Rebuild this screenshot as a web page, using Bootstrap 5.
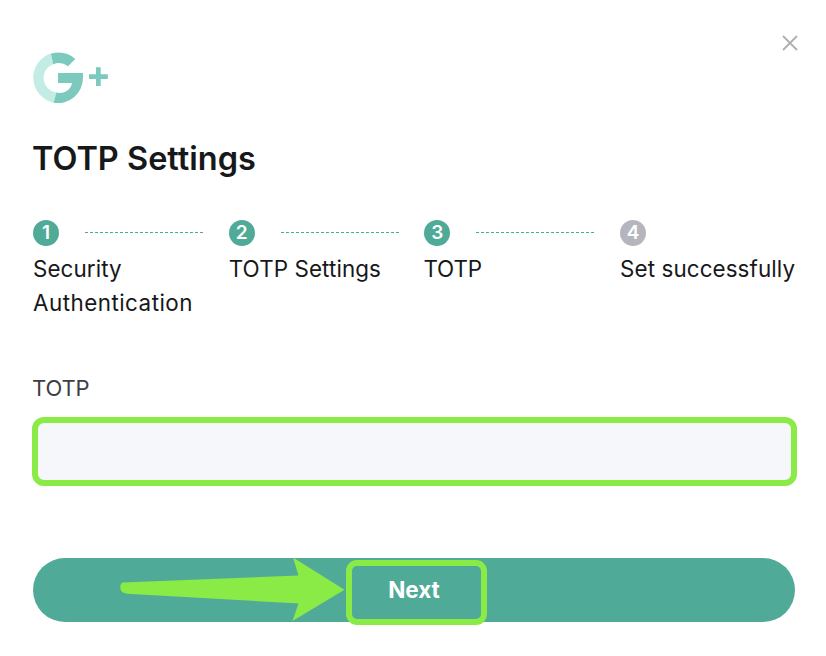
<!DOCTYPE html>
<html lang="en">
<head>
<meta charset="utf-8">
<meta name="viewport" content="width=device-width, initial-scale=1">
<title>TOTP Settings</title>
<link href="https://cdn.jsdelivr.net/npm/bootstrap@5.3.0/dist/css/bootstrap.min.css" rel="stylesheet">
<style>
body{font-family:Inter,"Liberation Sans",sans-serif;color:#17181a;background:#fff;overflow:hidden}
.dialog-box{height:656px;padding:52px 31px 0 33px}
.close-x{top:35px;right:28px;width:16px;height:16px;line-height:0}
.brand{height:52px;line-height:0}
.heading{font-size:32.5px;font-weight:600;line-height:44px;margin:33px 0 0 -1px;letter-spacing:0}
.steps{margin-top:39px}
.step{width:195.7px;flex:none}
.step:last-child{width:180px}
.num{width:26px;height:26px;background:#50aa98;color:#fff;font-size:19px;font-weight:600;line-height:1;padding-bottom:1px}
.num.off{background:#b5b6bd}
.dash{width:118px;height:1px;margin:0 0 1px 26px;background:repeating-linear-gradient(90deg,#3fae97 0 3px,transparent 3px 5px)}
.caption{font-size:22.4px;line-height:34px;margin-top:6px;white-space:nowrap;letter-spacing:.1px}
.caption .wide{letter-spacing:.48px}
.caption .tight,.field-label{letter-spacing:-.1px}
.field-label{font-size:22px;line-height:34px;color:#3c3e43;margin:51px 0 0 -1px}
.tight{margin-left:-1px}
.code-input{width:765px;height:69px;margin:12px 0 0 -1.5px;border:6px solid #8aeb46;border-radius:12px;background:#f6f7fa}
.code-input:focus{border-color:#8aeb46;box-shadow:none;background:#f6f7fa}
.action{width:762px;height:64px;margin-top:72px}
.btn-next{--bs-btn-bg:#50aa98;--bs-btn-hover-bg:#489b8a;--bs-btn-color:#fff;--bs-btn-hover-color:#fff;border:0;font-size:22.5px;font-weight:700;line-height:30px}
.mark-box{left:313px;top:2px;width:141px;height:65px;border:6px solid #8aeb46;border-radius:11px;pointer-events:none}
.arrow{left:85px;top:-2px;pointer-events:none}
</style>
</head>
<body>
<main class="dialog-box position-relative">
<a href="#" class="close-x position-absolute" aria-label="Close"><svg width="16" height="16" viewBox="0 0 16 16"><path d="M1 1 15 15M15 1 1 15" stroke="#afb0b3" stroke-width="1.9"/></svg></a>
<div class="brand"><svg width="78" height="52" viewBox="33 52 78 52">
<path d="M50.9 53.5A25.500 25.500 0 0 0 53.6 102.700L56.400 92.600A14.700 14.700 0 0 1 53.200 64.200Z" fill="#c2ece4"/>
<path d="M50.9 53.800A26 26 0 0 1 75.300 58.900L68 66.200A16 16 0 0 0 53.200 64.200Z" fill="#7ccabd"/>
<path d="M58 73H83V78A25 25 0 0 1 53.600 102.700L56.400 92.600C62 94 70.500 91.500 72 83H58Z" fill="#7ccabd"/>
<path d="M89 74.200H96V67.200H100.700V74.200H107.800V79H100.700V86H96V79H89Z" fill="#7ccabd"/></svg></div>
<h1 class="heading">TOTP Settings</h1>
<div class="steps d-flex">
<div class="step"><div class="d-flex align-items-center"><span class="num rounded-circle d-flex align-items-center justify-content-center">1</span><span class="dash"></span></div><div class="caption">Security<br><span class="wide">Authentication</span></div></div>
<div class="step"><div class="d-flex align-items-center"><span class="num rounded-circle d-flex align-items-center justify-content-center">2</span><span class="dash"></span></div><div class="caption">TOTP Settings</div></div>
<div class="step"><div class="d-flex align-items-center"><span class="num rounded-circle d-flex align-items-center justify-content-center">3</span><span class="dash"></span></div><div class="caption"><span class="tight">TOTP</span></div></div>
<div class="step"><div class="d-flex align-items-center"><span class="num off rounded-circle d-flex align-items-center justify-content-center">4</span></div><div class="caption">Set successfully</div></div>
</div>
<label class="field-label d-block" for="totp">TOTP</label>
<input id="totp" class="form-control code-input" type="text">
<div class="action position-relative"><button class="btn btn-next rounded-pill w-100 h-100" type="button">Next</button>
<svg class="arrow position-absolute" width="230" height="68" viewBox="118 556 230 68"><path d="M123 582.500 298.500 575.500 293 557.500 344.500 589.800 292.500 621 298.500 603.500 127 593.800Q120.300 593 120.300 587.500Q120.300 583 123 582.500Z" fill="#8aeb46"/></svg>
<span class="mark-box position-absolute"></span></div>
</main>
<script src="https://cdn.jsdelivr.net/npm/bootstrap@5.3.0/dist/js/bootstrap.bundle.min.js"></script>
</body>
</html>
